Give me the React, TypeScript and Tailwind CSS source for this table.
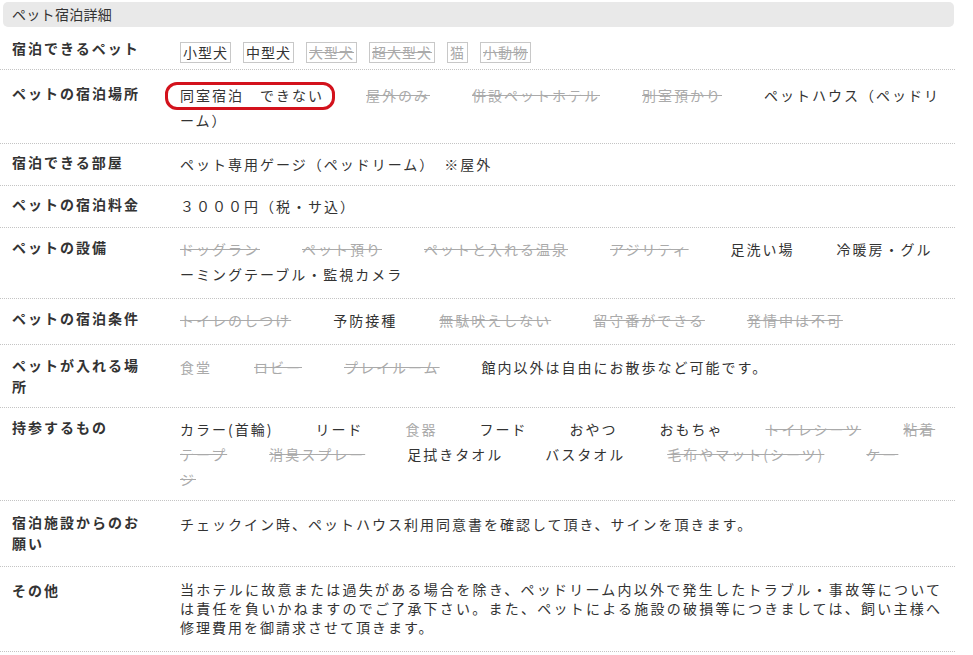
import React from 'react';

type Item = { text: string; on: boolean; plain?: boolean };

const font = { fontFamily: '"Noto Sans CJK JP", "Noto Sans", sans-serif' };

const petTypes: Item[] = [
  { text: '小型犬', on: true },
  { text: '中型犬', on: true },
  { text: '大型犬', on: false },
  { text: '超大型犬', on: false },
  { text: '猫', on: false, plain: true },
  { text: '小動物', on: false },
];

const places: Item[] = [
  { text: '屋外のみ', on: false },
  { text: '併設ペットホテル', on: false },
  { text: '別室預かり', on: false },
  { text: 'ペットハウス（ペッドリーム）', on: true },
];

const facilities: Item[] = [
  { text: 'ドッグラン', on: false },
  { text: 'ペット預り', on: false },
  { text: 'ペットと入れる温泉', on: false },
  { text: 'アジリティ', on: false },
  { text: '足洗い場', on: true },
  { text: '冷暖房・グルーミングテーブル・監視カメラ', on: true },
];

const conditions: Item[] = [
  { text: 'トイレのしつけ', on: false },
  { text: '予防接種', on: true },
  { text: '無駄吠えしない', on: false },
  { text: '留守番ができる', on: false },
  { text: '発情中は不可', on: false },
];

const areas: Item[] = [
  { text: '食堂', on: false, plain: true },
  { text: 'ロビー', on: false },
  { text: 'プレイルーム', on: false },
  { text: '館内以外は自由にお散歩など可能です。', on: true },
];

const belongings: Item[] = [
  { text: 'カラー(首輪)', on: true },
  { text: 'リード', on: true },
  { text: '食器', on: false, plain: true },
  { text: 'フード', on: true },
  { text: 'おやつ', on: true },
  { text: 'おもちゃ', on: true },
  { text: 'トイレシーツ', on: false },
  { text: '粘着テープ', on: false },
  { text: '消臭スプレー', on: false },
  { text: '足拭きタオル', on: true },
  { text: 'バスタオル', on: true },
  { text: '毛布やマット(シーツ)', on: false },
  { text: 'ケージ', on: false },
];

const Tag = ({ item }: { item: Item }) => (
  <span
    className={
      'mr-[42px] ' +
      (item.on ? 'text-[#333]' : item.plain ? 'text-[#aaa]' : 'text-[#aaa] line-through')
    }
  >
    {item.text}
  </span>
);

const Row = ({
  label,
  pad,
  children,
}: {
  label: string;
  pad: string;
  children: React.ReactNode;
}) => (
  <div className={'flex border-b border-dotted border-[#c4c4c4] ' + pad}>
    <div className="w-[180px] shrink-0 pl-3 pr-[32px] text-[14px] font-bold leading-[21px] tracking-[2px] text-[#333]">
      {label}
    </div>
    <div className="min-w-0 flex-1 pr-[13px] text-[14px] leading-[25px] tracking-[2px] text-[#333]">
      {children}
    </div>
  </div>
);

export default function App() {
  return (
    <div lang="ja" className="w-[955px] bg-white" style={font}>
      <div className="ml-[3px] mr-[1px] mt-[2px] h-[25px] rounded-[5px] bg-[#e9e9e9] pl-[9px] text-[14px] leading-[25px] tracking-[0.3px] text-[#333]">
        ペット宿泊詳細
      </div>

      <Row label="宿泊できるペット" pad="pt-[11px] pb-[6px]">
        {petTypes.map((p) => (
          <span
            key={p.text}
            className={
              'mr-3 inline-block border border-[#c8c8c8] px-[2px] align-middle leading-[19px] tracking-[1px] ' +
              (p.on ? 'text-[#333]' : p.plain ? 'text-[#aaa]' : 'text-[#aaa] line-through')
            }
          >
            {p.text}
          </span>
        ))}
      </Row>

      <Row label="ペットの宿泊場所" pad="pt-[13px] pb-[10px]">
        <span className="relative mr-[42px] inline-block text-[#333]">
          同室宿泊　できない
          <span className="absolute -bottom-[2px] -left-[15px] -right-[11px] -top-[1px] rounded-[12px] border-[3px] border-[#d3121c]" />
        </span>
        {places.map((p) => (
          <Tag key={p.text} item={p} />
        ))}
      </Row>

      <Row label="宿泊できる部屋" pad="pt-[8px] pb-[8px]">
        ペット専用ゲージ（ペッドリーム）　※屋外
      </Row>

      <Row label="ペットの宿泊料金" pad="pt-[8px] pb-[8px]">
        ３０００円（税・サ込）
      </Row>

      <Row label="ペットの設備" pad="pt-[9px] pb-[11px]">
        {facilities.map((p) => (
          <Tag key={p.text} item={p} />
        ))}
      </Row>

      <Row label="ペットの宿泊条件" pad="pt-[9px] pb-[11px]">
        {conditions.map((p) => (
          <Tag key={p.text} item={p} />
        ))}
      </Row>

      <Row label="ペットが入れる場所" pad="pt-[10px] pb-[10px]">
        {areas.map((p) => (
          <Tag key={p.text} item={p} />
        ))}
      </Row>

      <Row label="持参するもの" pad="pt-[9px] pb-[8px]">
        {belongings.map((p) => (
          <Tag key={p.text} item={p} />
        ))}
      </Row>

      <Row label="宿泊施設からのお願い" pad="pt-[11px] pb-[12px]">
        チェックイン時、ペットハウス利用同意書を確認して頂き、サインを頂きます。
      </Row>

      <Row label="その他" pad="pt-[13px] pb-[14px]">
        <p className="text-justify leading-[19px]">
          当ホテルに故意または過失がある場合を除き、ペッドリーム内以外で発生したトラブル・事故等については責任を負いかねますのでご了承下さい。また、ペットによる施設の破損等につきましては、飼い主様へ修理費用を御請求させて頂きます。
        </p>
      </Row>
    </div>
  );
}
